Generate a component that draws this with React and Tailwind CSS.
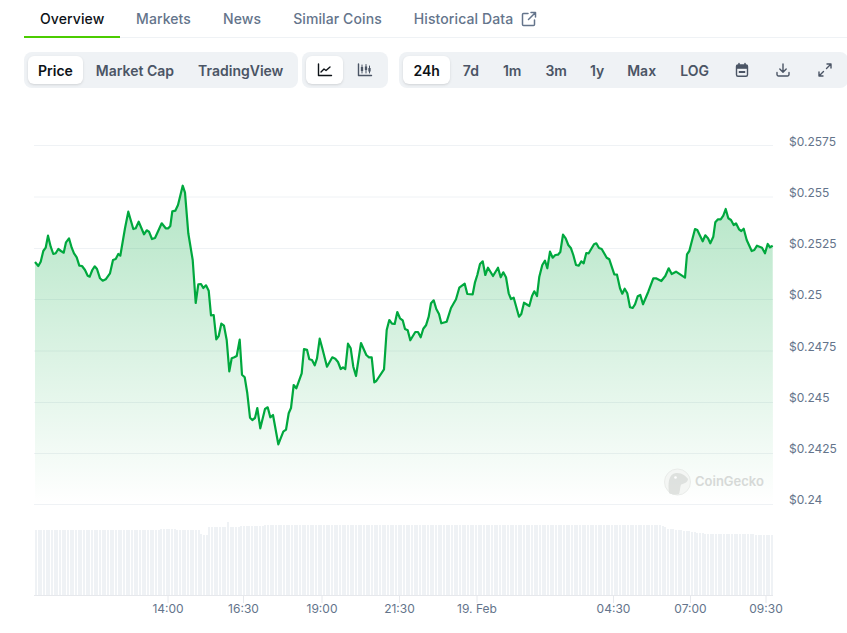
import React from "react";

const pts = "35,262 38.3,266 40.7,261.7 43.3,251 45.7,247.7 48,235.7 50.7,246.7 53.3,254 55.7,253.3 58.3,249 61,251 63.7,252.7 66,242.3 69,238.3 71.7,247.7 74,253.3 76.7,257.3 79.3,265.7 82,266 85,270 87.7,275.7 89.7,276.7 92.3,270 94.7,266.3 97,269 100,278.3 102.7,280.7 105.7,279.3 110,273.3 113,260 115.7,259 118.3,254 120.3,255.7 125,228.3 128.3,211.7 133.3,229 135.7,228.3 138.7,221.7 144,234.3 146.7,230.3 149,231.7 152,239 155,238 161.7,223.3 165.7,228.3 168.3,228.3 170.3,226 172.3,211.3 175.3,210.7 178,205 182.7,185.7 185,192.7 188.3,233.3 192.7,260 195.7,303 198.3,284.3 201,284 203.3,288 206,285.3 208.7,290.7 211,315.3 213.7,315 216.3,339.3 218.7,336 221.3,323.7 224,325.7 226.7,340 229.3,371.3 231.7,358.3 234.3,357.3 236.7,356 239.7,339.7 242,374.7 244.7,377.3 247.3,393.3 250,417.7 252.3,420 255,418 257.3,408 260.3,428.3 265,409 267.7,407.3 270.3,417.3 273,415 278.3,444.3 283.3,431.7 286,429.7 288.7,413.3 291,408 293.7,385 296.3,388.3 301.7,373.3 304,349 307,349.7 309.3,359.3 312,360 314.7,365.3 317,358.3 319.7,338.7 322.3,348.3 327,366.7 332.3,357.3 335.3,358.7 338,362 340.7,369 343,367.3 345.3,369 348,343.7 350.7,348.3 353.3,366.7 356,376 361,343 366.3,355 369,357.3 371.7,357.3 374.3,382.3 376.3,381 384,369.3 386.7,330 389.3,320 392,323.7 394.7,324 397.3,312 400,318.3 402.7,320.3 405,329 407.7,330.3 410.3,340.3 415.3,332 418,332 420.7,337.3 423.3,328.7 426,325.3 428.7,316.7 431,303.3 433.7,300.3 436.3,309 439,314 441.3,323.3 446.7,321.7 451,308 456,299.3 459.3,287.7 464.7,283.7 467.3,294 472.7,294.3 475,282.3 477.3,275 480,264 482.7,261.3 485.3,275 488,267.7 493,276 498,267.7 500.7,277.3 503.3,272.3 506,277.3 508.7,293.3 511,299 513.7,297.7 519,316.7 521.3,314 524,302.7 529.3,306 532,296 534.3,291.3 537,296 539.3,276.7 542.3,265 545,260.7 547.3,268.3 550,251.7 552.7,257.7 555.3,255 558,254.7 560.3,252 563,234.7 565.7,238.3 568.3,245 571,248.3 573.3,255 576,265 578.7,265.7 581.3,261.3 583.7,263.3 586.3,253 588.7,253.3 594,244.3 596.3,243.3 599,248 601.7,249 606.7,257.7 609.3,259.3 614.3,274.3 617,274.7 620,288.3 622.3,293.7 624.7,288.7 627.3,293.3 630,307.3 632.7,308 635,304.3 637.7,296.3 640.3,295 643,304.3 648.3,291.7 653.3,278.3 656,278.3 661.3,281 665.3,276 668.7,268.3 671.7,274 676,271.7 685,277.7 687,254.3 689.3,251 695,229 697.3,230 702.7,241.3 705.3,235.3 708,238.3 710.3,243.3 713.3,236.7 715.3,222.3 718,219.3 720.7,219.3 723.3,215.7 725.7,209 728.3,218.3 731,220 733.7,225 736,223.3 739,229.3 741.3,231 743.7,228.7 746.7,240 751.7,251 754.3,250 757,245.7 762,247.7 765,253.3 767.7,244 770,247.3 772.7,245.7";

const gridYs = [145.5, 197, 248.5, 299.5, 351, 402.5, 453.5, 504.5];
const priceLabels = [
  ["$0.2575", 146], ["$0.255", 197], ["$0.2525", 248], ["$0.25", 299],
  ["$0.2475", 351], ["$0.245", 402], ["$0.2425", 453], ["$0.24", 504],
];
const timeLabels = [
  ["14:00", 168], ["16:30", 243.5], ["19:00", 322], ["21:30", 399.5],
  ["19. Feb", 477], ["04:30", 613.5], ["07:00", 690.5], ["09:30", 766],
];

function volTop(x) {
  if (x < 200) return 529.5 + (x > 160 && x < 175 ? -1 : 0);
  if (x < 203) return 534;
  if (x < 208) return 535;
  if (x < 225) return 527;
  if (x < 228) return 522;
  if (x < 275) return 527 - ((x - 228) / 47) * 2;
  if (x < 657) return 524.5;
  if (x < 667) return 524.5 + ((x - 657) / 10) * 4;
  if (x < 707) return 528.5 + ((x - 667) / 40) * 5.5;
  if (x < 753) return 534;
  return 535;
}
const bars = [];
for (let x = 35; x < 772; x += 2.6667) bars.push(x);

function Chart() {
  return (
    <svg width="847" height="545" viewBox="0 88 847 545" className="block" style={{ fontFamily: "Inter, sans-serif" }}>
      <defs>
        <linearGradient id="area" x1="0" y1="185" x2="0" y2="504" gradientUnits="userSpaceOnUse">
          <stop offset="0" stopColor="#00a83e" stopOpacity="0.3" />
          <stop offset="1" stopColor="#00a83e" stopOpacity="0" />
        </linearGradient>
      </defs>
      {gridYs.map((y) => (
        <line key={y} x1="34" x2="773" y1={y} y2={y} stroke="#eff2f5" strokeWidth="1" />
      ))}
      <polygon points={`35,504 ${pts} 773,504`} fill="url(#area)" />
      <polyline points={pts} fill="none" stroke="#00a83e" strokeWidth="2.2" strokeLinejoin="round" />
      {priceLabels.map(([t, y]) => (
        <text key={t} x="789" y={y} fontSize="12" fill="#64748b">{t}</text>
      ))}
      {bars.map((x) => (
        <rect key={x} x={x} y={volTop(x)} width="2" height={595 - volTop(x)} fill="#eff2f5" shapeRendering="crispEdges" />
      ))}
      <line x1="34" x2="773" y1="595.5" y2="595.5" stroke="#e6e8ec" />
      {timeLabels.map(([t, x]) => (
        <g key={t}>
          <line x1={x} x2={x} y1="595" y2="603" stroke="#e6e8ec" />
          <text x={x} y="613" fontSize="12" fill="#64748b" textAnchor="middle">{t}</text>
        </g>
      ))}
      <g opacity="0.9">
        <circle cx="677.5" cy="482" r="13" fill="#f4f6f4" stroke="#e8ebe8" />
        <path d="M669 493 C668 484 668 474 676 473 C682 472.500 686 476 688 479 C688 482 684 484 681 484.500 C680 488 680 491 679 494 C675 495 671 494.500 669 493 Z" fill="#dcdfdc" />
        <circle cx="675.500" cy="477.500" r="1.300" fill="#fff" />
        <text x="695" y="486" fontSize="13" fontWeight="600" fill="#d3d6d4">CoinGecko</text>
      </g>
    </svg>
  );
}

const Ico = ({ children, cls = "w-4 h-4" }) => (
  <svg viewBox="0 0 16 16" fill="none" stroke="currentColor" strokeWidth="1.4" strokeLinecap="round" strokeLinejoin="round" className={cls}>
    {children}
  </svg>
);

const LineIcon = () => (
  <Ico>
    <path d="M1.500 2v11.500h13" />
    <path d="M4 10l3-3 2 1.500L13 5" />
  </Ico>
);
const CandleIcon = () => (
  <Ico>
    <path d="M1.500 2v11.500h13" />
    <path d="M5 3v8M9 2.500v8.500M12.500 4v7" strokeWidth="1" />
    <path d="M5 5v4M9 4.500v3.500M12.500 6v3.500" strokeWidth="2.300" strokeLinecap="butt" />
  </Ico>
);
const CalIcon = () => (
  <svg viewBox="0 0 16 16" className="w-4 h-4" fill="none">
    <path d="M5 1.500v2M11 1.500v2" stroke="currentColor" strokeWidth="1.500" strokeLinecap="round" />
    <rect x="2.500" y="3" width="11" height="11.200" rx="1.500" stroke="currentColor" strokeWidth="1.400" />
    <rect x="2.500" y="3" width="11" height="3.800" fill="currentColor" />
    <rect x="4.800" y="9" width="6.400" height="2" fill="currentColor" />
  </svg>
);
const DownIcon = () => (
  <Ico>
    <path d="M8 2v8M4.800 7l3.200 3.200L11.200 7" />
    <path d="M2 10.500v2a1.500 1.500 0 0 0 1.500 1.500h9a1.500 1.500 0 0 0 1.500-1.500v-2" />
  </Ico>
);
const ExpandIcon = () => (
  <Ico>
    <path d="M9.500 6.500L14 2M10 2h4v4" />
    <path d="M6.500 9.500L2 14M2 10v4h4" />
  </Ico>
);
const ExtIcon = () => (
  <svg viewBox="0 0 16 16" fill="none" stroke="currentColor" strokeWidth="1.500" className="w-4 h-4 ml-2" strokeLinecap="round" strokeLinejoin="round">
    <path d="M7 2.500H2.500a1 1 0 0 0-1 1V13.500a1 1 0 0 0 1 1h10a1 1 0 0 0 1-1V9" />
    <path d="M7.500 8.500L14.500 1.500M10 1.500h4.500V6" />
  </svg>
);

function Tab({ children, active, cls = "" }) {
  return (
    <div className={`h-[38px] px-4 pt-px shrink-0 whitespace-nowrap flex items-center text-sm font-medium tracking-[0.1px] border-b-2 ${cls} ${active ? "border-[#4bcc00] text-[#0d1217]" : "border-transparent text-[#64748b]"}`}>
      {children}
    </div>
  );
}

function Btn({ children, active, cls = "px-[11px]" }) {
  return (
    <div className={`h-7 shrink-0 whitespace-nowrap flex items-center rounded-md text-sm font-semibold ${cls} ${active ? "bg-white text-[#0d1217] shadow-sm" : "text-[#4b5565]"}`}>
      {children}
    </div>
  );
}

function Group({ children, cls = "" }) {
  return <div className={`h-9 p-1 flex items-center gap-0.5 rounded-lg bg-[#eff2f5] ${cls}`}>{children}</div>;
}

const T = ({ children }) => <span className="pt-px">{children}</span>;

export default function App() {
  return (
    <div className="w-[847px] h-[633px] overflow-hidden bg-white" style={{ fontFamily: "Inter, sans-serif" }}>
      <div className="ml-6 flex border-b border-[#eff2f5] h-[38px]">
        <Tab active cls="w-24">Overview</Tab>
        <Tab>Markets</Tab>
        <Tab>News</Tab>
        <Tab>Similar Coins</Tab>
        <Tab>Historical Data<ExtIcon /></Tab>
      </div>
      <div className="ml-6 mt-3.5 flex items-center">
        <Group>
          <Btn active cls="px-2.5"><T>Price</T></Btn>
          <Btn><T>Market Cap</T></Btn>
          <Btn><T>TradingView</T></Btn>
        </Group>
        <Group cls="ml-1">
          <Btn active cls="w-[37px] justify-center"><LineIcon /></Btn>
          <Btn cls="w-[39px] justify-center"><CandleIcon /></Btn>
        </Group>
        <Group cls="ml-[11px] flex-1">
          <Btn active cls="px-2.5"><T>24h</T></Btn>
          <Btn><T>7d</T></Btn>
          <Btn><T>1m</T></Btn>
          <Btn><T>3m</T></Btn>
          <Btn cls="px-2.5"><T>1y</T></Btn>
          <Btn cls="pl-[11px] pr-[11px]"><T>Max</T></Btn>
          <Btn><T>LOG</T></Btn>
          <Btn cls="w-[39.5px] justify-center"><CalIcon /></Btn>
          <Btn cls="w-[39.5px] justify-center"><DownIcon /></Btn>
          <Btn cls="w-[39.5px] justify-center"><ExpandIcon /></Btn>
        </Group>
      </div>
      <Chart />
    </div>
  );
}
